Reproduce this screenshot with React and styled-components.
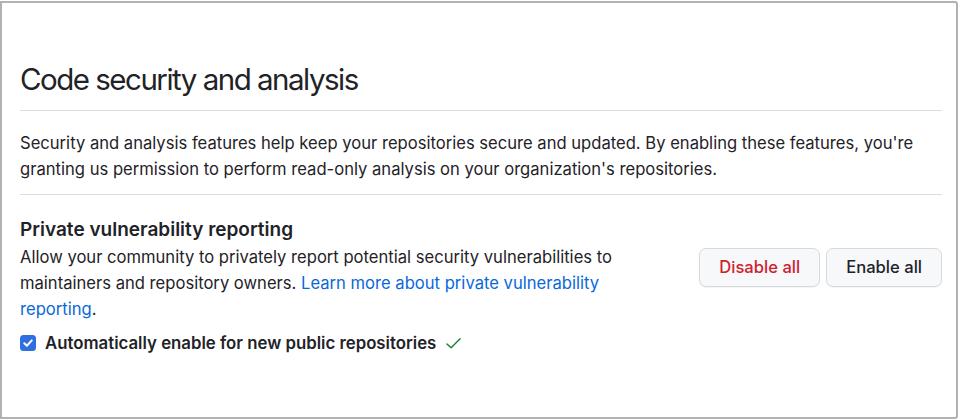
import React from "react";
import styled, { createGlobalStyle } from "styled-components";

const Global = createGlobalStyle`
  html, body { margin: 0; padding: 0; background: #ffffff; }
  body { font-family: Inter, "Noto Sans", "Liberation Sans", sans-serif; color: #1f2328; }
  * { box-sizing: border-box; }
`;

const Frame = styled.div`
  width: 958px;
  height: 418px;
  margin-top: 1px;
  border: 2px solid #b2b2b2;
  border-radius: 0 3px 3px 0;
  background: #fff;
  padding: 58px 14px 0 18px;
`;

const Heading = styled.h2`
  margin: 0;
  font-size: 29.5px;
  font-weight: 400;
  line-height: 36px;
  letter-spacing: -1.5px;
  padding-bottom: 13px;
  border-bottom: 1px solid #d8dee4;
`;

const Intro = styled.p`
  margin: 0;
  padding: 19px 0 12px;
  font-size: 16.6px;
  line-height: 26px;
  border-bottom: 1px solid #d8dee4;
`;

const Section = styled.section`
  padding-top: 23px;
`;

const Row = styled.div`
  display: flex;
  align-items: center;
  justify-content: space-between;
`;

const Info = styled.div`
  width: 600px;
`;

const SectionTitle = styled.h3`
  margin: 0;
  font-size: 19px;
  font-weight: 600;
  line-height: 24px;
  margin-bottom: 2px;
`;

const Description = styled.p`
  margin: 0;
  font-size: 16.6px;
  line-height: 26px;
`;

const Link = styled.a`
  color: #0969da;
  text-decoration: none;
`;

const Buttons = styled.div`
  display: flex;
  gap: 6px;
  margin-bottom: 6px;
`;

const Button = styled.button`
  height: 39px;
  padding: 0 19px;
  font-family: inherit;
  font-size: 16.6px;
  font-weight: 500;
  color: ${(p) => (p.$danger ? "#cf222e" : "#1f2328")};
  background: #f6f8fa;
  border: 1px solid #d5d9de;
  border-radius: 7px;
  box-shadow: 0 1px 0 rgba(31, 35, 40, 0.04);
`;

const CheckRow = styled.label`
  display: flex;
  align-items: center;
  gap: 9px;
  margin-top: 8px;
  height: 26px;
  font-size: 16.8px;
  font-weight: 600;
`;

const Box = styled.span`
  width: 16px;
  height: 16px;
  border-radius: 3.5px;
  background: #2f6fe0;
  display: inline-flex;
  align-items: center;
  justify-content: center;
  flex: none;
`;

const Saved = styled.svg`
  margin-left: 0;
  flex: none;
`;

export default function App() {
  return (
    <>
      <Global />
      <Frame>
        <Heading>Code security and analysis</Heading>
        <Intro>
          Security and analysis features help keep your repositories secure and updated. By enabling these
          features, you're granting us permission to perform read-only analysis on your organization's
          repositories.
        </Intro>
        <Section>
          <Row>
            <Info>
              <SectionTitle>Private vulnerability reporting</SectionTitle>
              <Description>
                Allow your community to privately report potential security vulnerabilities to maintainers and
                repository owners. <Link href="#">Learn more about private vulnerability reporting</Link>.
              </Description>
            </Info>
            <Buttons>
              <Button $danger>Disable all</Button>
              <Button>Enable all</Button>
            </Buttons>
          </Row>
          <CheckRow>
            <Box>
              <svg width="12" height="12" viewBox="0 0 12 12">
                <path d="M2.3 6.2 L4.9 8.7 L9.8 3.4" fill="none" stroke="#fff" strokeWidth="2" strokeLinecap="round" strokeLinejoin="round" />
              </svg>
            </Box>
            Automatically enable for new public repositories
            <Saved width="17" height="17" viewBox="0 0 16 16">
              <path d="M1.8 8.4 L5.8 12 L14.2 3.6" fill="none" stroke="#1a7f37" strokeWidth="1.3" strokeLinecap="round" strokeLinejoin="round" />
            </Saved>
          </CheckRow>
        </Section>
      </Frame>
    </>
  );
}
